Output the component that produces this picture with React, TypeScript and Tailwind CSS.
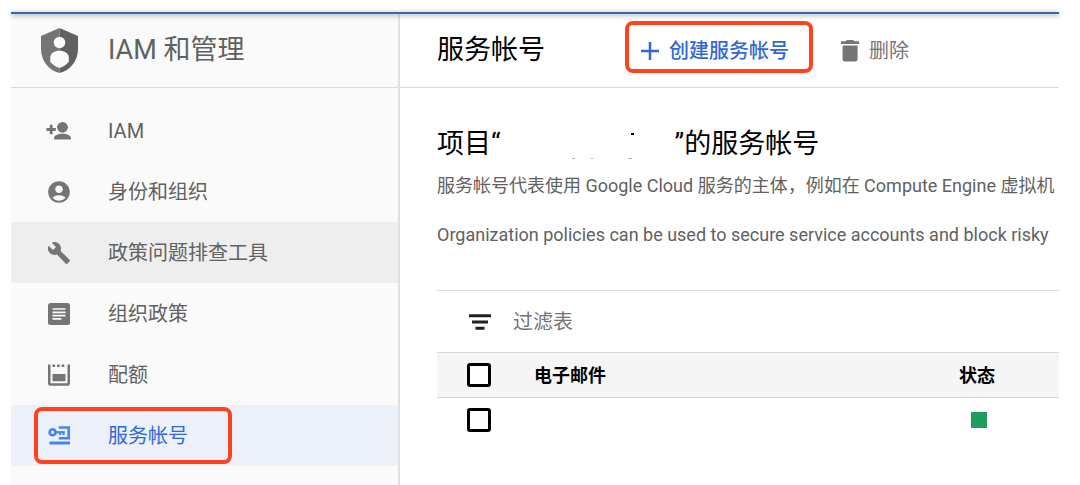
import { ReactNode } from "react";
import { MdAccountCircle, MdBuild } from "react-icons/md";

const ShieldIcon = () => (
  <svg viewBox="0 0 37 45" className="h-[45px] w-[37px]" aria-hidden="true">
    <path d="M18.5 0 0 8v13c0 12 8 21.5 18.5 24z" fill="#757575" />
    <path d="M18.5 0 37 8v13c0 12-8 21.5-18.5 24z" fill="#616161" />
    <circle cx="18.5" cy="14.5" r="5.8" fill="#fafafa" />
    <path
      d="M9.2 29.500c0-4.200 4.600-6.800 9.300-6.800s9.300 2.600 9.300 6.800v4.300c-2.400 3-5.500 5-9.300 6.200-3.800-1.200-6.900-3.200-9.300-6.200z"
      fill="#fafafa"
    />
  </svg>
);

const AddPersonIcon = () => (
  <svg viewBox="0 0 26 20" className="h-5 w-[26px]" fill="currentColor" aria-hidden="true">
    <circle cx="16.5" cy="6.3" r="5.4" />
    <path d="M8 18.500v-1.300c0-3 4-4.500 8.500-4.500s8.500 1.500 8.500 4.500v1.300z" />
    <path d="M.5 8.500h9.300M5.150 3.800v9.400" fill="none" stroke="currentColor" strokeWidth="2.800" />
  </svg>
);

const PolicyIcon = () => (
  <svg viewBox="0 0 22 22" className="size-[22px]" aria-hidden="true">
    <rect width="22" height="22" rx="2.5" fill="currentColor" />
    <path d="M4.5 6h13M4.5 9.300h13M4.5 12.600h13M4.5 15.900h9" stroke="#fafafa" strokeWidth="1.700" />
  </svg>
);

const QuotaIcon = () => (
  <svg viewBox="0 0 22 22" className="size-[22px]" fill="currentColor" aria-hidden="true">
    <path d="M0 .5h2.500v18.700h17V.5H22v19a2.200 2.200 0 0 1-2.200 2.200H2.200A2.200 2.200 0 0 1 0 19.500z" />
    <path d="M4.500 10h13v7.300h-13zM4.500.5h2.600v2.600H4.500zM9.100.5h2.600v2.600H9.100zM13.700.5h2.600v2.600h-2.600z" />
  </svg>
);

const ServiceAccountIcon = () => (
  <svg viewBox="0 0 22 19" className="h-[19px] w-[22px]" fill="none" stroke="currentColor" aria-hidden="true">
    <circle cx="4.6" cy="6.2" r="3" strokeWidth="2.600" />
    <path d="M7.500 6.200h9.300" strokeWidth="2.200" />
    <path d="M12.100 6v3M15.500 6v3" strokeWidth="2" />
    <path d="M10.700 1.500h10v10.800h-10" strokeWidth="2.600" />
    <path d="M1.500 17H22" strokeWidth="3" />
  </svg>
);

const PlusIcon = () => (
  <svg viewBox="0 0 18 18" className="size-[18px]" aria-hidden="true">
    <path d="M9 0v18M0 9h18" stroke="currentColor" strokeWidth="2.500" />
  </svg>
);

const TrashIcon = () => (
  <svg viewBox="0 0 18 22" className="h-[22px] w-[18px]" fill="currentColor" aria-hidden="true">
    <path d="M0 1.300h4.500L6 0h6l1.500 1.300H18v2.700H0zM1.600 5.600h15v13.600a2.400 2.400 0 0 1-2.400 2.400H4a2.400 2.400 0 0 1-2.400-2.400z" />
  </svg>
);

const FilterIcon = () => (
  <svg viewBox="0 0 22 16" className="h-4 w-[22px] shrink-0" aria-hidden="true">
    <path d="M0 1.700h22M3 8h16M6.500 14.300h9" stroke="#212121" strokeWidth="2.900" />
  </svg>
);

type NavItem = {
  label: string;
  icon: ReactNode;
  state?: "hover" | "active";
};

const navItems: NavItem[] = [
  { label: "IAM", icon: <AddPersonIcon /> },
  { label: "身份和组织", icon: <MdAccountCircle size={26} /> },
  { label: "政策问题排查工具", icon: <MdBuild size={24} />, state: "hover" },
  { label: "组织政策", icon: <PolicyIcon /> },
  { label: "配额", icon: <QuotaIcon /> },
  { label: "服务帐号", icon: <ServiceAccountIcon />, state: "active" },
];

const navStyles = {
  default: "text-[#616161]",
  hover: "bg-[#eeeeee] text-[#616161]",
  active: "bg-[#ecf0f9] text-[#3367d6]",
};

const checkboxStyle =
  "block size-6 appearance-none rounded-[3px] border-3 border-black bg-white checked:bg-black";

function Sidebar() {
  return (
    <aside className="flex w-[389px] shrink-0 flex-col border-r-2 border-[#e0e0e0] bg-[#fafafa]">
      <div className="flex h-[74px] items-center border-b border-[#d9d9d9] pl-[30px]">
        <ShieldIcon />
        <h2 className="ml-[30px] text-[27px] text-[#616161]">IAM 和管理</h2>
      </div>
      <nav className="pt-3">
        {navItems.map(({ label, icon, state = "default" }) => (
          <a
            key={label}
            href="#"
            className={`relative flex h-[61px] items-center pl-[34px] text-[20px] ${navStyles[state]}`}
          >
            <span
              className={`flex w-7 justify-center ${state === "active" ? "text-[#4285f4]" : "text-[#757575]"}`}
            >
              {icon}
            </span>
            <span className="ml-[35px]">{label}</span>
            {state === "active" && (
              <span className="absolute inset-y-0.5 left-[23px] w-[198px] rounded-lg border-4 border-[#ff431f]" />
            )}
          </a>
        ))}
      </nav>
    </aside>
  );
}

function Toolbar() {
  return (
    <header className="flex h-[74px] items-center border-b border-[#d9d9d9] pl-[37px]">
      <h1 className="text-[27px] text-black">服务帐号</h1>
      <button
        type="button"
        className="relative ml-24 flex h-9 items-center gap-2.5 text-[20px] font-medium text-[#3367d6]"
      >
        <PlusIcon />
        创建服务帐号
        <span className="absolute -top-3 -right-6 -bottom-1 -left-4 rounded-lg border-4 border-[#ff431f]" />
      </button>
      <button type="button" className="ml-[52px] flex items-center gap-2.5 text-[20px] text-[#757575]">
        <TrashIcon />
        删除
      </button>
    </header>
  );
}

// 项目名称已被抹去，只剩下笔画的零星痕迹
function ErasedName() {
  return (
    <svg viewBox="0 0 174 36" className="h-9 w-[174px]" fill="#000" aria-hidden="true">
      <path d="M130 7h3v2h-3z" />
      <path d="M71 32h3v1h-3zM90 32h2v1h-2zM127 32h4v1h-4z" opacity=".3" />
    </svg>
  );
}

function AccountTable() {
  return (
    <section className="mt-[41px] border-t border-[#d9d9d9]">
      <label className="flex h-[61px] items-center gap-[22px] pl-8">
        <FilterIcon />
        <input
          type="text"
          placeholder="过滤表"
          aria-label="过滤表"
          className="w-full text-[20px] outline-none placeholder:text-[#757575]"
        />
      </label>
      <table className="w-full table-fixed border-collapse text-left text-[18px]">
        <thead>
          <tr className="h-[45px] border-y border-[#d9d9d9] bg-[#f5f5f5]">
            <th className="w-[97px] pl-[30px]">
              <input type="checkbox" aria-label="全选" className={checkboxStyle} />
            </th>
            <th className="font-bold">电子邮件</th>
            <th className="w-[100px] font-bold">状态</th>
          </tr>
        </thead>
        <tbody>
          <tr className="h-11">
            <td className="pl-[30px]">
              <input type="checkbox" aria-label="选择" className={checkboxStyle} />
            </td>
            <td />
            <td className="pl-3">
              <span className="block size-4 bg-[#1e9e5a]" />
            </td>
          </tr>
        </tbody>
      </table>
    </section>
  );
}

export default function App() {
  return (
    <div className="min-h-screen bg-white pt-3 pr-[21px] pl-[11px] font-['Roboto','Noto_Sans_CJK_SC',sans-serif]">
      <div className="relative z-10 h-0.5 bg-[#3367b0] shadow-[0_1px_5px_rgba(0,0,0,0.5)]" />
      <div className="flex min-h-[calc(100vh-14px)]">
        <Sidebar />
        <div className="min-w-0 flex-1 overflow-hidden">
          <Toolbar />
          <main className="pt-[38px] pl-[37px]">
            <h2 className="flex h-9 items-center text-[27px] whitespace-nowrap text-black">
              项目“
              <ErasedName />
              ”的服务帐号
            </h2>
            <p className="mt-2.5 overflow-hidden text-[18px] leading-7 whitespace-nowrap text-[#616161]">
              服务帐号代表使用 Google Cloud 服务的主体，例如在 Compute Engine 虚拟机
            </p>
            <p className="mt-[21px] overflow-hidden text-[18px] leading-7 whitespace-nowrap text-[#616161]">
              Organization policies can be used to secure service accounts and block risky
            </p>
            <AccountTable />
          </main>
        </div>
      </div>
    </div>
  );
}
